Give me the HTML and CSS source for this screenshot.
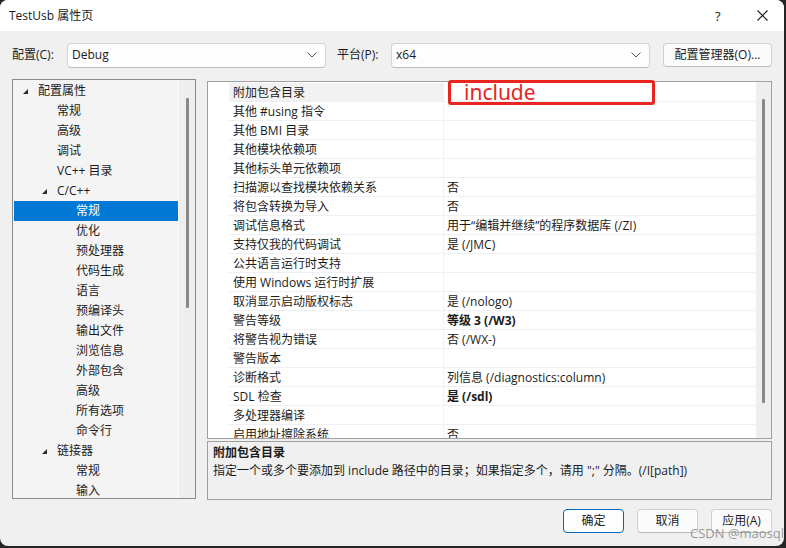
FILE: index.html
```html
<!DOCTYPE html>
<html lang="zh">
<head>
<meta charset="utf-8">
<title>TestUsb 属性页</title>
<link rel="stylesheet" href="styles.css">
</head>
<body>
<div class="window">
  <div class="titlebar">
    <span class="title">TestUsb 属性页</span>
    <span class="help">?</span>
    <span class="close"><svg width="11" height="11" viewBox="0 0 11 11"><path d="M0.5 0.5 L10.5 10.5 M10.5 0.5 L0.5 10.5" stroke="#1a1a1a" stroke-width="1.1" fill="none"/></svg></span>
  </div>
  <div class="content">
    <div class="config-row">
      <span class="lbl lbl-cfg">配置(C):</span>
      <div class="combo"><span>Debug</span><svg class="chev" width="10" height="6" viewBox="0 0 10 6"><path d="M0.5 0.5 L5 5 L9.5 0.5" stroke="#555" stroke-width="1" fill="none"/></svg></div>
      <span class="lbl lbl-plat">平台(P):</span>
      <div class="combo"><span>x64</span><svg class="chev" width="10" height="6" viewBox="0 0 10 6"><path d="M0.5 0.5 L5 5 L9.5 0.5" stroke="#555" stroke-width="1" fill="none"/></svg></div>
      <button class="btn btn-mgr">配置管理器(O)...</button>
    </div>
    <div class="main">
      <div class="tree">
        <div class="tree-list">
          <div class="node l0x"><i class="tri"></i>配置属性</div>
          <div class="node l1">常规</div>
          <div class="node l1">高级</div>
          <div class="node l1">调试</div>
          <div class="node l1">VC++ 目录</div>
          <div class="node l1x"><i class="tri"></i>C/C++</div>
          <div class="node l2 sel">常规</div>
          <div class="node l2">优化</div>
          <div class="node l2">预处理器</div>
          <div class="node l2">代码生成</div>
          <div class="node l2">语言</div>
          <div class="node l2">预编译头</div>
          <div class="node l2">输出文件</div>
          <div class="node l2">浏览信息</div>
          <div class="node l2">外部包含</div>
          <div class="node l2">高级</div>
          <div class="node l2">所有选项</div>
          <div class="node l2">命令行</div>
          <div class="node l1x"><i class="tri"></i>链接器</div>
          <div class="node l2">常规</div>
          <div class="node l2">输入</div>
        </div>
        <div class="vscroll tree-scroll"><div class="thumb"></div></div>
      </div>
      <div class="right">
        <div class="grid">
          <div class="gutter"></div>
          <div class="rows">
            <div class="row cur"><span class="name">附加包含目录</span><span class="val"></span></div>
            <div class="row"><span class="name">其他 #using 指令</span><span class="val"></span></div>
            <div class="row"><span class="name">其他 BMI 目录</span><span class="val"></span></div>
            <div class="row"><span class="name">其他模块依赖项</span><span class="val"></span></div>
            <div class="row"><span class="name">其他标头单元依赖项</span><span class="val"></span></div>
            <div class="row"><span class="name">扫描源以查找模块依赖关系</span><span class="val">否</span></div>
            <div class="row"><span class="name">将包含转换为导入</span><span class="val">否</span></div>
            <div class="row"><span class="name">调试信息格式</span><span class="val">用于“编辑并继续”的程序数据库 (/ZI)</span></div>
            <div class="row"><span class="name">支持仅我的代码调试</span><span class="val">是 (/JMC)</span></div>
            <div class="row"><span class="name">公共语言运行时支持</span><span class="val"></span></div>
            <div class="row"><span class="name">使用 Windows 运行时扩展</span><span class="val"></span></div>
            <div class="row"><span class="name">取消显示启动版权标志</span><span class="val">是 (/nologo)</span></div>
            <div class="row"><span class="name">警告等级</span><span class="val bold">等级 3 (/W3)</span></div>
            <div class="row"><span class="name">将警告视为错误</span><span class="val">否 (/WX-)</span></div>
            <div class="row"><span class="name">警告版本</span><span class="val"></span></div>
            <div class="row"><span class="name">诊断格式</span><span class="val">列信息 (/diagnostics:column)</span></div>
            <div class="row"><span class="name">SDL 检查</span><span class="val bold">是 (/sdl)</span></div>
            <div class="row"><span class="name">多处理器编译</span><span class="val"></span></div>
            <div class="row"><span class="name">启用地址擦除系统</span><span class="val">否</span></div>
          </div>
          <div class="vscroll grid-scroll"><div class="thumb"></div></div>
          <div class="mark">include</div>
        </div>
        <div class="desc">
          <div class="desc-title">附加包含目录</div>
          <div class="desc-text">指定一个或多个要添加到 include 路径中的目录；如果指定多个，请用 ";" 分隔。(/I[path])</div>
        </div>
      </div>
    </div>
    <div class="buttons">
      <button class="btn btn-ok">确定</button>
      <button class="btn">取消</button>
      <button class="btn">应用(A)</button>
    </div>
  </div>
  <div class="watermark">CSDN @maosql</div>
</div>
</body>
</html>
```

FILE: styles.css
```css
* { box-sizing: border-box; }
html, body { margin: 0; padding: 0; }
body {
  background: #262626;
  width: 786px;
  height: 548px;
  overflow: hidden;
  font-family: "Open Sans", "Noto Sans CJK SC", sans-serif;
  font-size: 12px;
  color: #1b1b1b;
}
.window {
  position: relative;
  width: 784px;
  height: 546px;
  background: #f0f0f0;
  border-radius: 8px;
  overflow: hidden;
  display: flex;
  flex-direction: column;
}
.titlebar {
  height: 31px;
  background: #ffffff;
  display: flex;
  align-items: center;
  padding-left: 9px;
}
.title { flex: 1; font-size: 12px; line-height: 16px; }
.help { font-size: 13px; width: 42px; line-height: 16px; }
.close { width: 27px; display: flex; align-items: center; height: 12px; }

.content {
  flex: 1;
  display: flex;
  flex-direction: column;
  padding: 11px 12px 0 12px;
}
.config-row {
  display: flex;
  align-items: center;
  height: 26px;
}
.lbl { line-height: 16px; }
.lbl-cfg { width: 55px; }
.lbl-plat { width: 54px; margin-left: 11px; }
.combo {
  width: 259px;
  height: 25px;
  background: #fdfdfd;
  border: 1px solid #d3d3d3;
  border-bottom-color: #bdbdbd;
  border-radius: 4px;
  display: flex;
  align-items: center;
  justify-content: space-between;
  padding: 0 8px 0 4px;
  line-height: 16px;
}
.chev { display: block; }
.btn {
  font-family: inherit;
  font-size: 12px;
  color: #1b1b1b;
  background: #fbfbfb;
  border: 1px solid #d0d0d0;
  border-bottom-color: #bbbbbb;
  border-radius: 4px;
  height: 24px;
  padding: 0;
  line-height: 16px;
}
.btn-mgr { width: 109px; margin-left: 13px; }

.main {
  display: flex;
  margin-top: 11px;
  height: 421px;
}
.tree {
  width: 185px;
  height: 420px;
  border: 1px solid #868a92;
  background: #f4f4f4;
  display: flex;
  padding-left: 1px;
  overflow: hidden;
}
.tree-list {
  width: 165px;
  padding-top: 1px;
}
.node {
  height: 20px;
  display: flex;
  align-items: center;
  line-height: 16px;
  white-space: nowrap;
}
.node.l0x { padding-left: 9px; }
.node.l1 { padding-left: 43px; }
.node.l1x { padding-left: 28px; }
.node.l2 { padding-left: 62px; }
.node.sel { background: #0078d4; color: #ffffff; }
.tri {
  display: block;
  width: 0;
  height: 0;
  border-bottom: 5px solid #2a2a2a;
  border-left: 5px solid transparent;
  margin-right: 10px;
  margin-top: 1px;
}
.vscroll {
  background: #eeeeee;
  position: relative;
}
.tree-scroll {
  width: 17px;
  border-left: 1px solid #fafafa;
}
.thumb {
  position: absolute;
  background: #888888;
  width: 3px;
  border-radius: 1px;
}
.tree-scroll .thumb { left: 7px; top: 18px; height: 210px; }

.right {
  margin-left: 11px;
  width: 565px;
  display: flex;
  flex-direction: column;
}
.grid {
  position: relative;
  margin-top: 2px;
  height: 358px;
  border: 1px solid #a0a0a0;
  background: #ffffff;
  display: flex;
}
.gutter { width: 21px; background: #ffffff; }
.rows { width: 527px; overflow: hidden; padding-top: 1px; }
.row {
  height: 19px;
  display: flex;
  border-bottom: 1px solid #eef0f4;
  line-height: 16px;
}
.row .name {
  width: 215px;
  padding-left: 4px;
  padding-top: 2px;
  border-right: 1px solid #f0f1f4;
  display: flex;
  align-items: center;
  white-space: nowrap;
}
.row .val {
  flex: 1;
  padding-left: 3px;
  padding-top: 2px;
  display: flex;
  align-items: center;
  white-space: nowrap;
}
.row.cur .name { background: #f2f2f2; }
.val.bold { font-weight: bold; }
.grid-scroll { width: 15px; }
.grid-scroll .thumb { left: 6px; top: 17px; height: 304px; }
.mark {
  position: absolute;
  left: 240px;
  top: -2px;
  width: 207px;
  height: 25px;
  border: 3px solid #e8261e;
  border-radius: 3px;
  color: #e8261e;
  font-family: "Noto Sans", "Open Sans", sans-serif;
  font-size: 21px;
  line-height: 19px;
  padding-left: 13px;
}

.desc {
  margin-top: 2px;
  height: 59px;
  border: 1px solid #a0a0a0;
  background: #f0f0f0;
  padding: 3px 0 0 5px;
}
.desc-title { font-weight: bold; line-height: 16px; height: 18px; }
.desc-text { line-height: 16px; }

.buttons {
  display: flex;
  justify-content: flex-end;
  gap: 13px;
  margin-top: 9px;
}
.buttons .btn { width: 61px; background: #fbfbfb; }
.buttons .btn-ok { border: 1px solid #0067c0; background: #fdfdfd; }
.watermark {
  position: absolute;
  left: 690px;
  top: 524px;
  white-space: nowrap;
  font-family: "Open Sans", sans-serif;
  font-size: 13px;
  color: rgba(120,120,120,0.75);
  line-height: 18px;
}
```
